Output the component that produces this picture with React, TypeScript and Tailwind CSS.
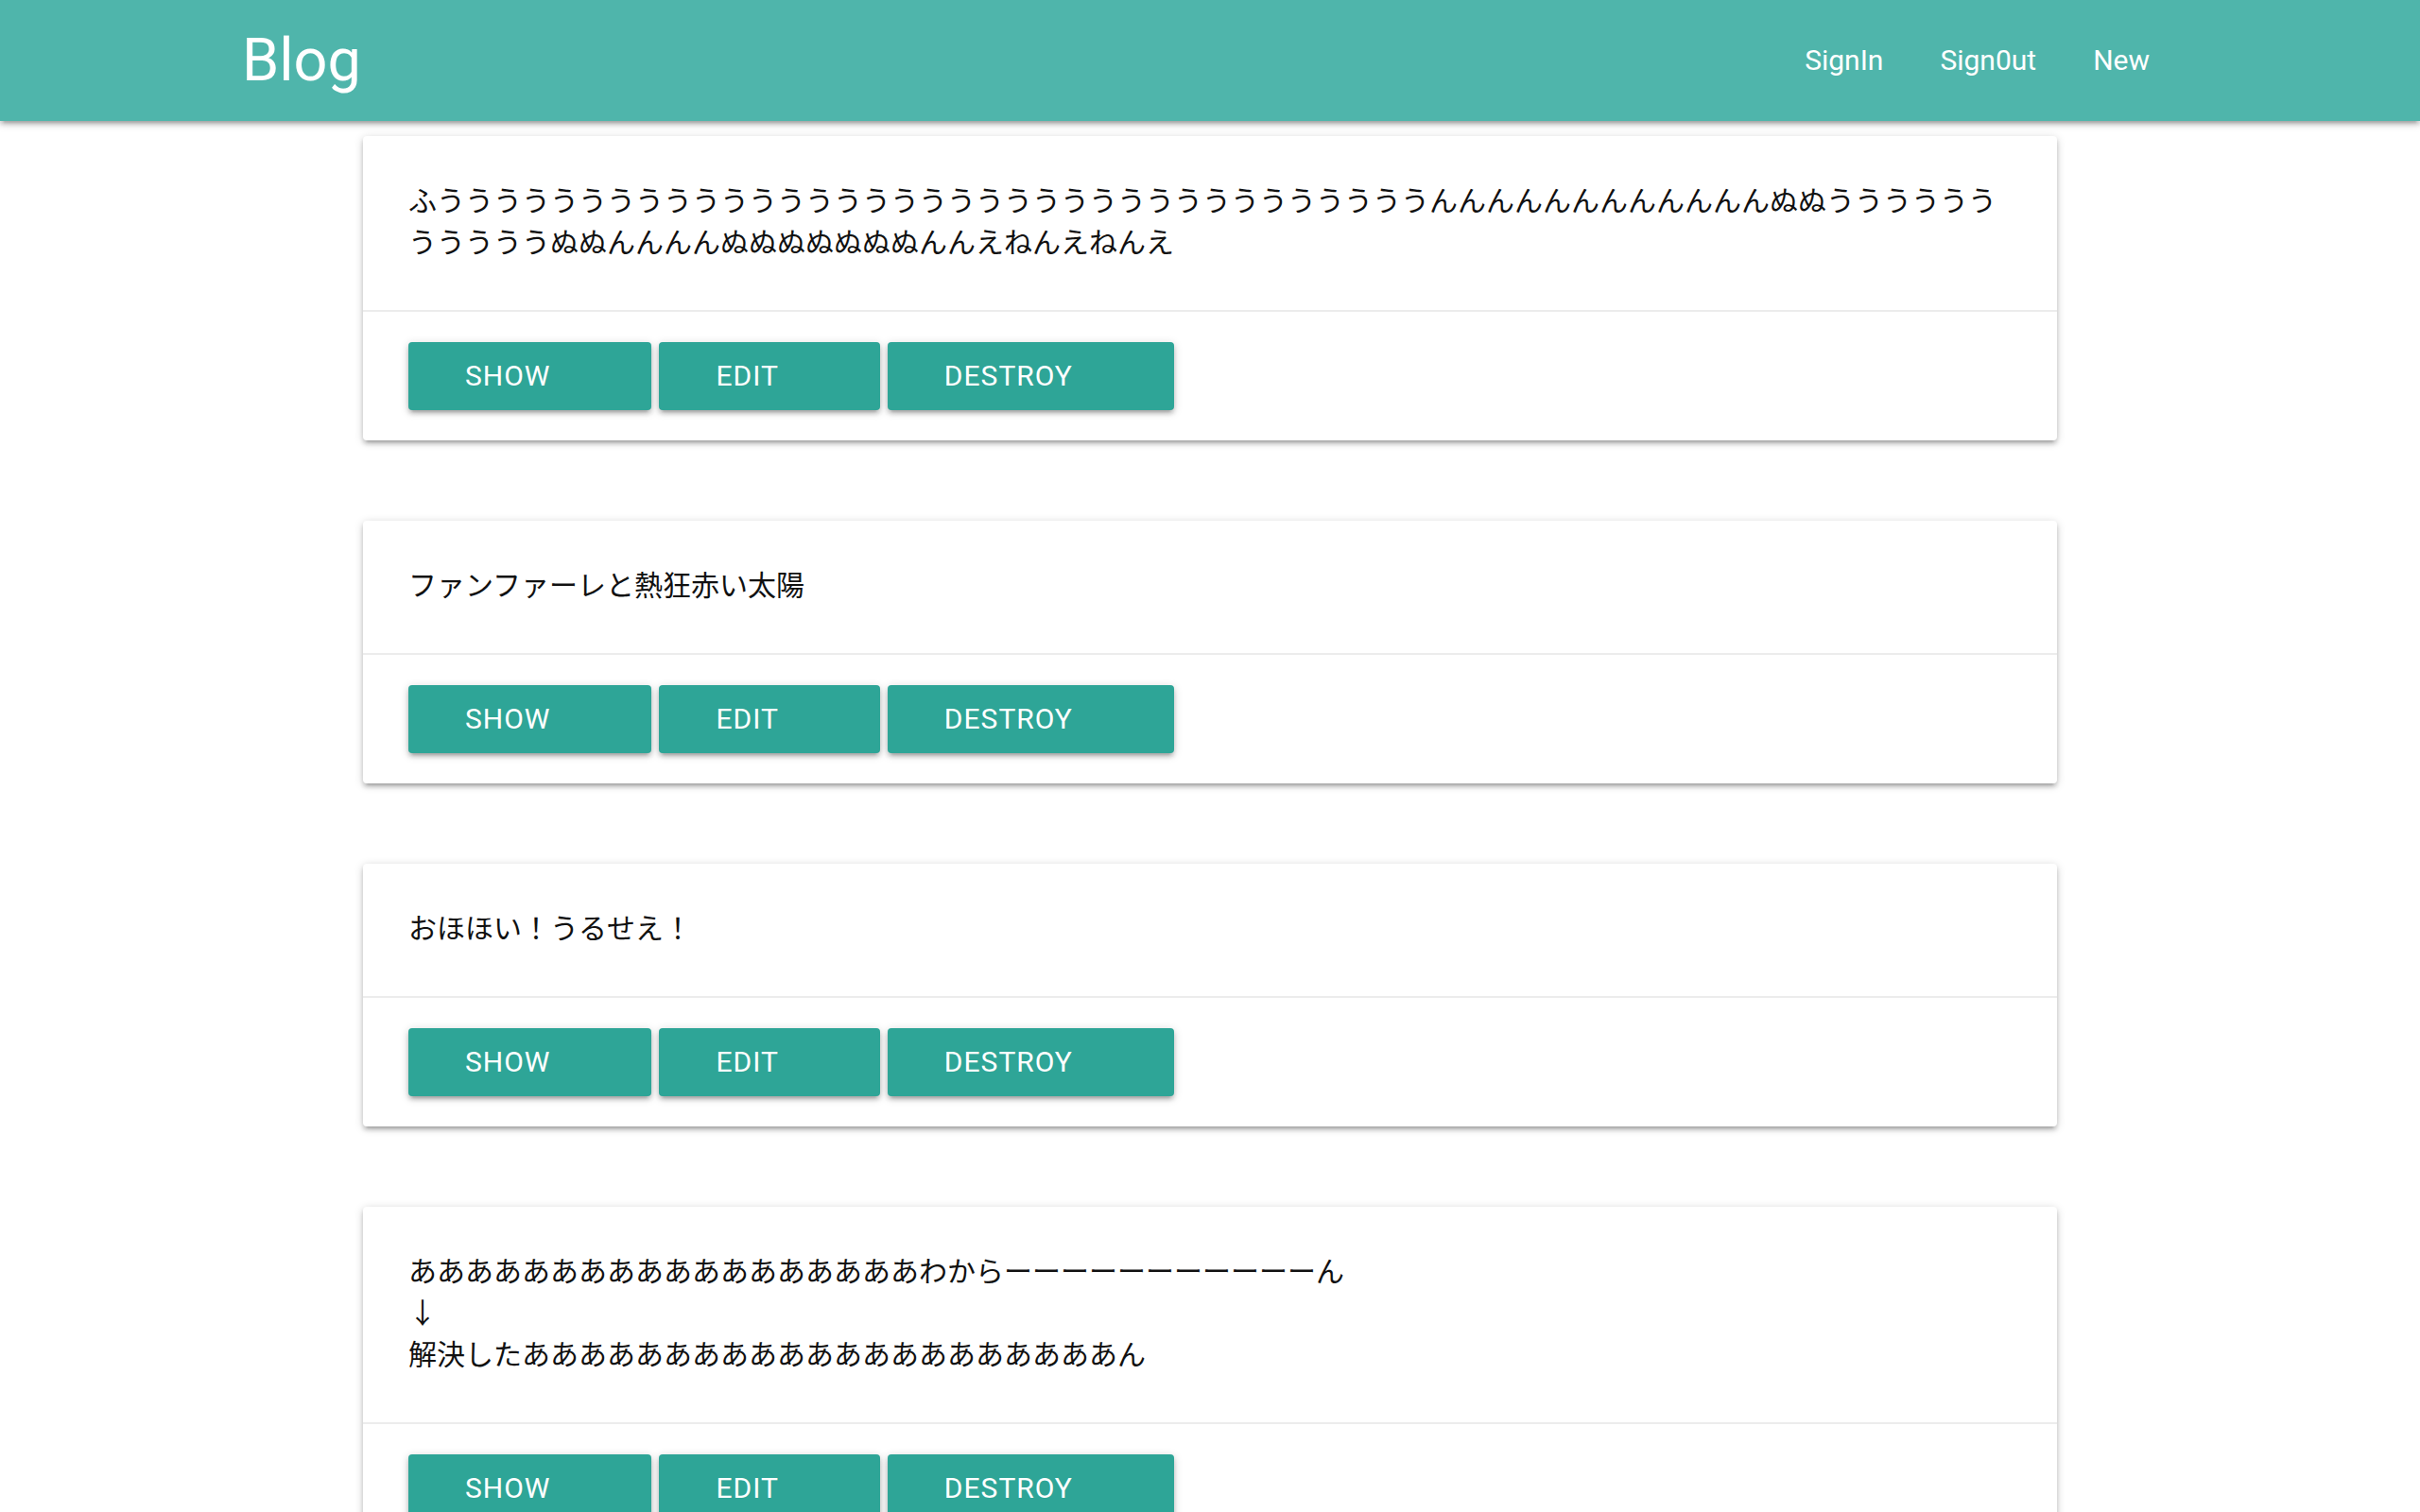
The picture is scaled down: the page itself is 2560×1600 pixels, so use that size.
import React from 'react';

type Post = {
  id: number;
  lines: string[];
};

const posts: Post[] = [
  {
    id: 1,
    lines: [
      'ふ' +
        'う'.repeat(35) +
        'ん'.repeat(12) +
        'ぬぬ' +
        'う'.repeat(11) +
        'ぬぬ' +
        'ん'.repeat(4) +
        'ぬ'.repeat(7) +
        'んん' +
        'えねんえねんえ',
    ],
  },
  { id: 2, lines: ['ファンファーレと熱狂赤い太陽'] },
  { id: 3, lines: ['おほほい！うるせえ！'] },
  {
    id: 4,
    lines: [
      'あ'.repeat(18) + 'わから' + 'ー'.repeat(11) + 'ん',
      '↓',
      '解決した' + 'あ'.repeat(21) + 'ん',
    ],
  },
];

const shadow =
  'shadow-[0_4px_4px_0_rgba(0,0,0,0.14),0_6px_2px_-4px_rgba(0,0,0,0.12),0_2px_10px_0_rgba(0,0,0,0.2)]';

const ActionButton = ({ label }: { label: string }) => (
  <a
    href="#"
    className={`block h-[72px] pl-[60px] pr-[107px] rounded-[4px] bg-[#2ea597] text-white text-[30px] leading-[72px] tracking-[1px] uppercase whitespace-nowrap ${shadow}`}
  >
    {label}
  </a>
);

const PostCard = ({ post }: { post: Post }) => {
  return (
    <li className={`bg-white rounded-[4px] ${shadow}`}>
      <div className="px-[48px] pt-[44px] pb-[52px] font-['Noto_Sans_CJK_JP',sans-serif] text-[30px] leading-[44px] text-[#111]">
        {post.lines.map((line, i) => (
          <p key={i} className="break-all">
            {line}
          </p>
        ))}
      </div>
      <div className="border-t-2 border-[rgba(160,160,160,0.2)] px-[48px] py-[32px] flex gap-2">
        <ActionButton label="Show" />
        <ActionButton label="Edit" />
        <ActionButton label="Destroy" />
      </div>
    </li>
  );
};

const App = () => {
  return (
    <div className="min-h-screen bg-white font-['Roboto','Noto_Sans_CJK_JP',sans-serif]">
      <nav className={`relative z-10 h-[128px] bg-[#4fb5ab] text-white ${shadow}`}>
        <div className="mx-[256px] flex items-center justify-between h-full">
          <a href="#" className="text-[63px] leading-[128px]">
            Blog
          </a>
          <ul className="flex">
            {['SignIn', 'Sign0ut', 'New'].map((item) => (
              <li key={item}>
                <a href="#" className="block px-[30px] text-[30px] leading-[128px]">
                  {item}
                </a>
              </li>
            ))}
          </ul>
        </div>
      </nav>
      <main className="w-[1792px] mx-auto pt-[16px] pb-[32px]">
        <ul className="flex flex-col gap-[85px]">
          {posts.map((post) => (
            <PostCard key={post.id} post={post} />
          ))}
        </ul>
      </main>
    </div>
  );
};

export default App;
